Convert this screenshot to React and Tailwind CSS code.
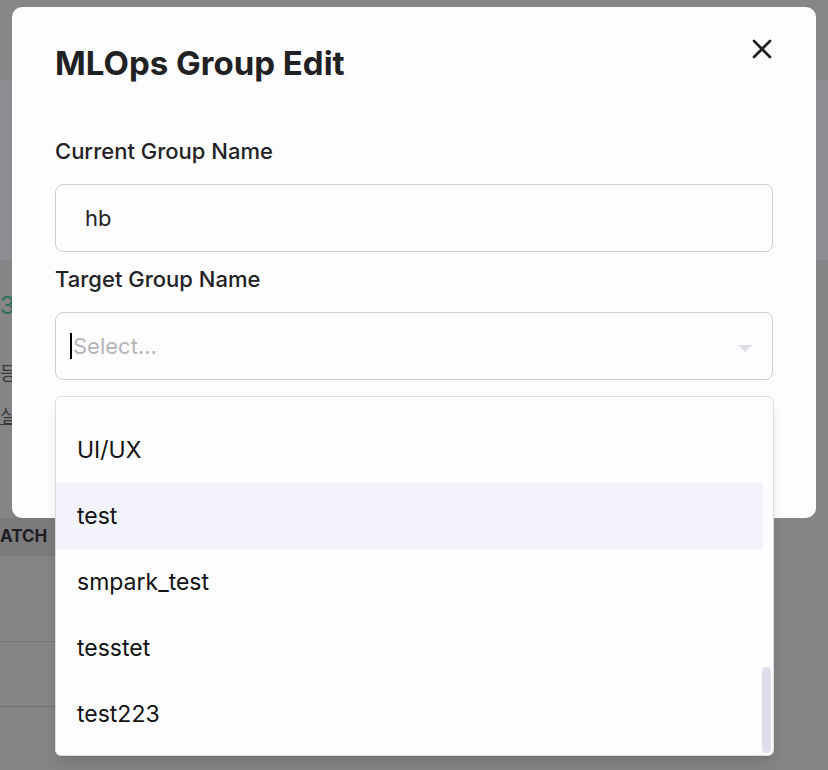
import { X } from "lucide-react";

const options = ["UI/UX", "test", "smpark_test", "tesstet", "test223"];

export default function App() {
  return (
    <div className="relative h-[770px] w-[828px] overflow-hidden bg-[#858587]" style={{ fontFamily: "Inter, 'Noto Sans CJK KR', sans-serif" }}>
      {/* dimmed page behind */}
      <div className="flex flex-col">
        <div className="h-[80px] bg-[#87878a]" />
        <div className="h-[180px] bg-[#8e8e92]" />
        <div className="h-[255px] pt-[28px] text-[24px] text-[#2f6e57]">
          <div>31</div>
          <div className="mt-[36px] text-[18px] text-[#3a3a3c]">등</div>
          <div className="mt-[16px] text-[18px] text-[#3a3a3c] underline">실</div>
        </div>
        <div className="flex h-[44px] items-center">
          <span className="bg-[#7b7b7d] py-[6px] pl-0 pr-[8px] text-[17px] font-bold text-[#1f1f21]">ATCH</span>
        </div>
        <div className="mt-[82px] h-px w-[250px] bg-[#777779]" />
        <div className="mt-[64px] h-px w-[250px] bg-[#6f6f71]" />
      </div>

      {/* modal */}
      <div className="absolute left-[12px] top-[7px] h-[511px] w-[804px] rounded-[10px] bg-[#fdfdff] px-[43px] pt-[38px]">
        <div className="flex items-start justify-between">
          <h1 className="text-[33px] font-bold leading-[36px] text-[#212124]">MLOps Group Edit</h1>
          <X className="mr-[-5px] mt-[-12px] h-[32px] w-[32px] text-[#222]" strokeWidth={2} />
        </div>
        <div className="mt-[55px] text-[22px] font-medium leading-[30px] text-[#222225]">Current Group Name</div>
        <div className="mt-[18px] flex h-[68px] w-[718px] items-center rounded-[8px] border border-[#cfcfd3] pl-[29px] text-[22px] text-[#222]">hb</div>
        <div className="mt-[12px] text-[22px] font-medium leading-[30px] text-[#222225]">Target Group Name</div>
        <div className="mt-[18px] flex h-[68px] w-[718px] items-center justify-between rounded-[8px] border border-[#cfcfd3] pl-[14px] pr-[20px] text-[22px]">
          <span className="flex items-center text-[#b4b4b8]">
            <span className="mr-[1px] h-[26px] w-[2px] bg-black" />Select...
          </span>
          <span className="mt-1 h-0 w-0 border-l-[7px] border-r-[7px] border-t-[7px] border-l-transparent border-r-transparent border-t-[#dedee3]" />
        </div>
      </div>

      {/* dropdown */}
      <div className="absolute left-[55px] top-[396px] h-[360px] w-[719px] overflow-hidden rounded-[6px] border border-[#dcdce0] bg-[#fdfdff] shadow-lg">
        <div className="h-[20px]" />
        {options.map((o) => (
          <div
            key={o}
            className={`flex h-[66px] w-[707px] items-center pl-[21px] text-[23px] text-[#111] ${o === "test" ? "bg-[#f3f3fb]" : ""}`}
          >
            {o}
          </div>
        ))}
        <div className="absolute right-[2px] top-[270px] h-[86px] w-[9px] rounded-full bg-[#dedeea]" />
      </div>
    </div>
  );
}
